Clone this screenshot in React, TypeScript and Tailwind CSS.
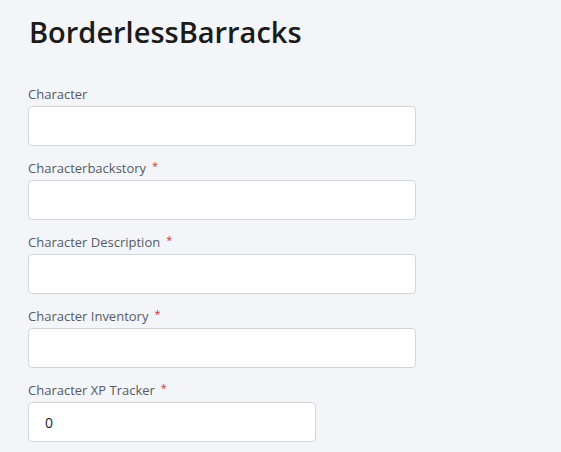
const fields = [
  { label: "Character", required: false, value: "", narrow: false },
  { label: "Characterbackstory", required: true, value: "", narrow: false },
  { label: "Character Description", required: true, value: "", narrow: false },
  { label: "Character Inventory", required: true, value: "", narrow: false },
  { label: "Character XP Tracker", required: true, value: "0", narrow: true },
];

export default function App() {
  return (
    <div className="min-h-[452px] bg-[#f3f5f8] px-7 pt-3 font-['Open_Sans',sans-serif]">
      <h1 className="text-[29px] font-semibold text-[#1b1b1b] leading-[40px] mb-[30px] ml-px">
        BorderlessBarracks
      </h1>
      <form className="flex flex-col">
        {fields.map((f) => (
          <div key={f.label} className="mb-[10px]">
            <label className="flex items-center h-6 pt-px text-[13px] text-[#555b66]">
              {f.label}
              {f.required && <span className="ml-[6px] text-[#d13438] text-[11px] -mt-1">*</span>}
            </label>
            <input
              defaultValue={f.value}
              className={`block h-10 rounded border border-[#d1d5db] bg-white px-4 text-[14px] text-[#1b1b1b] outline-none ${f.narrow ? "w-[288px]" : "w-[388px]"}`}
            />
          </div>
        ))}
      </form>
    </div>
  );
}
